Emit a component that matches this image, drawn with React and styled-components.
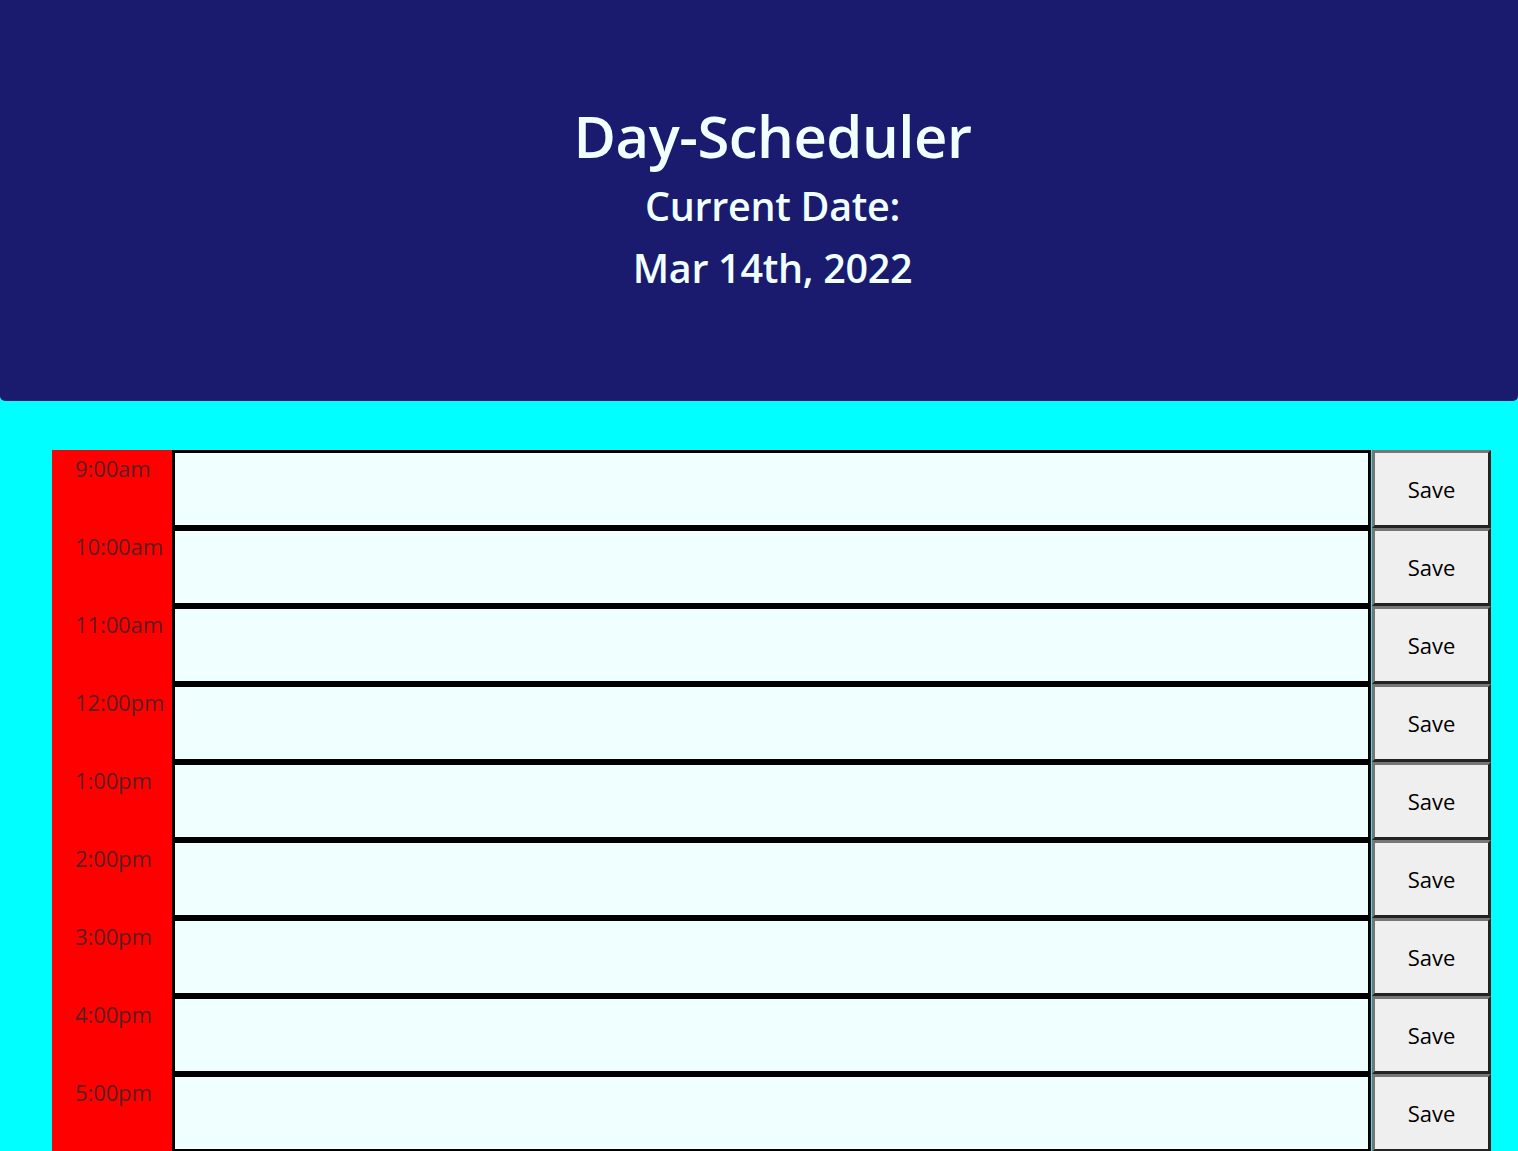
import styled, { createGlobalStyle } from 'styled-components';

const GlobalStyle = createGlobalStyle`
  body {
    margin: 0;
    background: #00ffff;
    font-family: 'Open Sans', 'Noto Sans', sans-serif;
  }
`;

const Header = styled.header`
  background: #1a1a6e;
  color: #f0ffff;
  height: 401px;
  border-radius: 0 0 5px 5px;
  display: flex;
  flex-direction: column;
  align-items: center;
  padding: 101px 0 0 27px;
  box-sizing: border-box;
`;

const Title = styled.h1`
  margin: 0;
  font-size: 58px;
  font-weight: 600;
  line-height: 70px;
  letter-spacing: -0.5px;
`;

const SubTitle = styled.p`
  margin: 0;
  font-size: 39.5px;
  font-weight: 600;
  line-height: 62px;
  letter-spacing: -0.3px;

  &:first-of-type {
    margin-top: 4px;
  }
`;

const Schedule = styled.main`
  padding: 49px 27px 0 52px;
`;

const Row = styled.div`
  display: flex;
  height: 78px;
`;

const Hour = styled.div`
  width: 120px;
  flex-shrink: 0;
  background: #ff0000;
  color: rgba(40, 40, 40, 0.8);
  font-size: 22px;
  line-height: 30px;
  padding: 3px 0 0 23px;
  box-sizing: border-box;
  letter-spacing: -0.1px;
`;

const Entry = styled.textarea`
  flex: 1;
  background: #f0ffff;
  border: 3px solid #000;
  margin: 0;
  padding: 4px;
  resize: none;
  font-family: inherit;
  font-size: 18px;
`;

const SaveButton = styled.button`
  width: 119px;
  flex-shrink: 0;
  margin-left: 1px;
  background: #efefef;
  border: 3px solid;
  border-color: #767676 #222 #222 #767676;
  font-family: inherit;
  font-size: 22px;
  color: #000;
  padding: 0;
  cursor: pointer;
`;

const hours = ['9:00am', '10:00am', '11:00am', '12:00pm', '1:00pm', '2:00pm', '3:00pm', '4:00pm', '5:00pm'];

function App() {
  return (
    <>
      <GlobalStyle />
      <Header>
        <Title>Day-Scheduler</Title>
        <SubTitle>Current Date:</SubTitle>
        <SubTitle>Mar 14th, 2022</SubTitle>
      </Header>
      <Schedule>
        {hours.map(h => (
          <Row key={h}>
            <Hour>{h}</Hour>
            <Entry />
            <SaveButton>Save</SaveButton>
          </Row>
        ))}
      </Schedule>
    </>
  );
}

export default App;
